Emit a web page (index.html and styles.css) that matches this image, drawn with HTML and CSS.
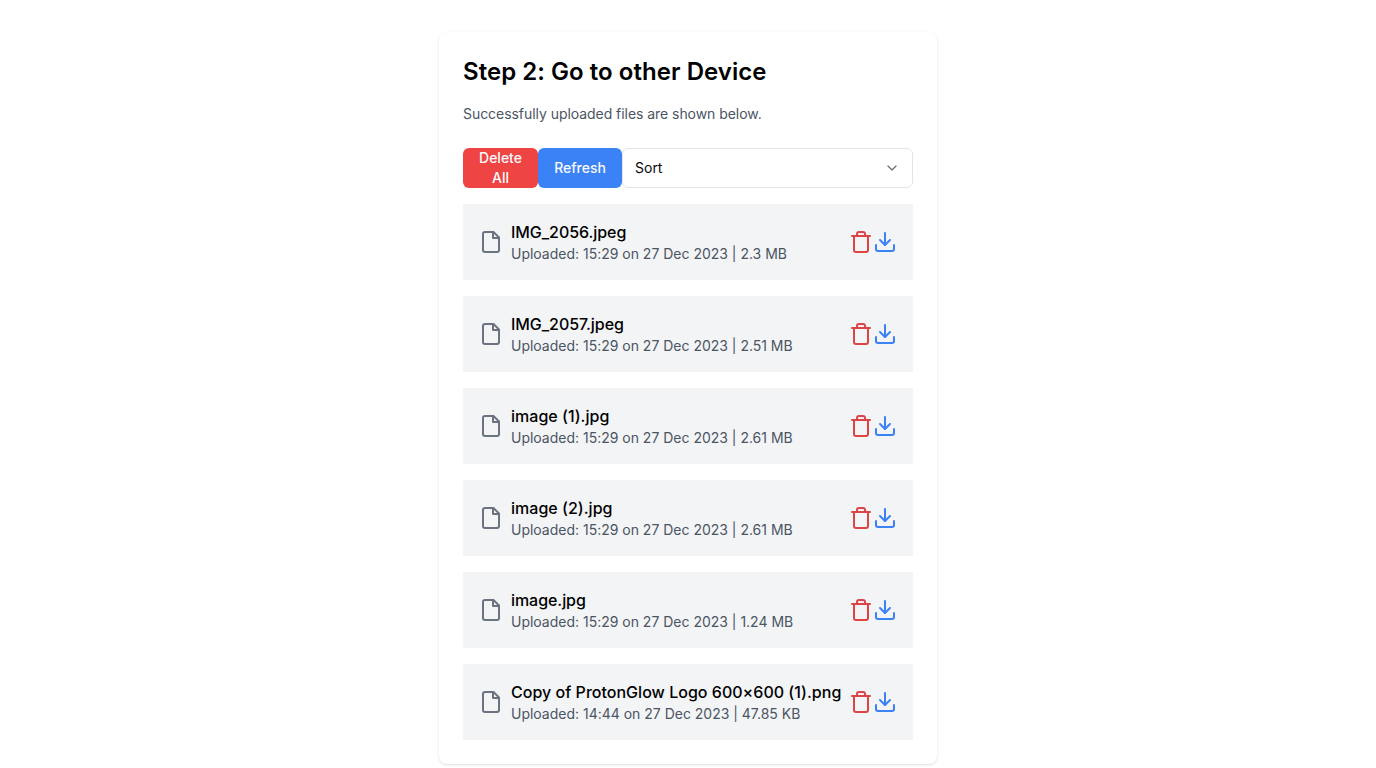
FILE: index.html
```html
<!DOCTYPE html>
<html lang="en">
<head>
<meta charset="utf-8">
<title>Step 2: Go to other Device</title>
<link rel="stylesheet" href="styles.css">
</head>
<body>
<svg class="sprite" aria-hidden="true">
  <symbol id="file" viewBox="0 0 24 24"><path d="M14.5 2H6a2 2 0 0 0-2 2v16a2 2 0 0 0 2 2h12a2 2 0 0 0 2-2V7.5L14.5 2z"/><path d="M14 2v6h6"/></symbol>
  <symbol id="trash" viewBox="0 0 24 24"><path d="M3 6h18"/><path d="M19 6v14c0 1-1 2-2 2H7c-1 0-2-1-2-2V6"/><path d="M8 6V4c0-1 1-2 2-2h4c1 0 2 1 2 2v2"/></symbol>
  <symbol id="download" viewBox="0 0 24 24"><path d="M21 15v4a2 2 0 0 1-2 2H5a2 2 0 0 1-2-2v-4"/><path d="M7 10l5 5 5-5"/><path d="M12 15V3"/></symbol>
  <symbol id="chevron" viewBox="0 0 24 24"><path d="m6 9 6 6 6-6"/></symbol>
</svg>
<main class="card">
  <h2 class="title">Step 2: Go to other Device</h2>
  <p class="subtitle">Successfully uploaded files are shown below.</p>
  <div class="toolbar">
    <button class="btn btn-delete">Delete<br>All</button>
    <button class="btn btn-refresh">Refresh</button>
    <button class="select"><span>Sort</span><svg class="icon icon-chevron"><use href="#chevron"/></svg></button>
  </div>
  <ul class="files">
    <li class="file">
      <svg class="icon icon-file"><use href="#file"/></svg>
      <div class="info"><p class="name name-short">IMG_2056.jpeg</p><p class="meta">Uploaded: 15:29 on 27 Dec 2023 | 2.3 MB</p></div>
      <svg class="icon icon-trash"><use href="#trash"/></svg><svg class="icon icon-download"><use href="#download"/></svg>
    </li>
    <li class="file">
      <svg class="icon icon-file"><use href="#file"/></svg>
      <div class="info"><p class="name name-short">IMG_2057.jpeg</p><p class="meta">Uploaded: 15:29 on 27 Dec 2023 | 2.51 MB</p></div>
      <svg class="icon icon-trash"><use href="#trash"/></svg><svg class="icon icon-download"><use href="#download"/></svg>
    </li>
    <li class="file">
      <svg class="icon icon-file"><use href="#file"/></svg>
      <div class="info"><p class="name">image (1).jpg</p><p class="meta">Uploaded: 15:29 on 27 Dec 2023 | 2.61 MB</p></div>
      <svg class="icon icon-trash"><use href="#trash"/></svg><svg class="icon icon-download"><use href="#download"/></svg>
    </li>
    <li class="file">
      <svg class="icon icon-file"><use href="#file"/></svg>
      <div class="info"><p class="name">image (2).jpg</p><p class="meta">Uploaded: 15:29 on 27 Dec 2023 | 2.61 MB</p></div>
      <svg class="icon icon-trash"><use href="#trash"/></svg><svg class="icon icon-download"><use href="#download"/></svg>
    </li>
    <li class="file">
      <svg class="icon icon-file"><use href="#file"/></svg>
      <div class="info"><p class="name name-short">image.jpg</p><p class="meta">Uploaded: 15:29 on 27 Dec 2023 | 1.24 MB</p></div>
      <svg class="icon icon-trash"><use href="#trash"/></svg><svg class="icon icon-download"><use href="#download"/></svg>
    </li>
    <li class="file">
      <svg class="icon icon-file"><use href="#file"/></svg>
      <div class="info"><p class="name">Copy of ProtonGlow Logo 600×600 (1).png</p><p class="meta">Uploaded: 14:44 on 27 Dec 2023 | 47.85 KB</p></div>
      <svg class="icon icon-trash"><use href="#trash"/></svg><svg class="icon icon-download"><use href="#download"/></svg>
    </li>
  </ul>
</main>
</body>
</html>
```
FILE: styles.css
```css
* {
  box-sizing: border-box;
  margin: 0;
  padding: 0;
}

body {
  height: 100vh;
  padding-top: 32px;
  background: #fff;
  color: #000;
  font: 16px/24px Inter, "Liberation Sans", sans-serif;
}

.sprite {
  display: none;
}

.card {
  width: 498px;
  margin: 0 auto;
  padding: 24px;
  border-radius: 8px;
  background: #fff;
  box-shadow: 0 1px 3px rgb(0 0 0 / 0.1), 0 1px 2px -1px rgb(0 0 0 / 0.1);
}

.title {
  margin-bottom: 16px;
  font-size: 24px;
  line-height: 32px;
  font-weight: 600;
  letter-spacing: 0.04px;
}

.subtitle {
  margin-bottom: 24px;
  font-size: 14px;
  line-height: 20px;
  letter-spacing: -0.05px;
  color: #4b5563;
}

.toolbar {
  display: flex;
  height: 40px;
  margin-bottom: 16px;
}

.btn,
.select {
  display: flex;
  align-items: center;
  border: 0;
  border-radius: 6px;
  font: 500 14px/20px Inter, "Liberation Sans", sans-serif;
}

.btn {
  justify-content: center;
  text-align: center;
  color: #f8fafc;
}

.btn-delete {
  width: 75px;
  background: #ef4444;
}

.btn-refresh {
  width: 84px;
  background: #3b82f6;
}

.select {
  flex: 1;
  justify-content: space-between;
  padding: 0 12px;
  border: 1px solid #e4e4e7;
  background: #fff;
  color: #09090b;
  font-weight: 400;
}

.files {
  display: grid;
  gap: 16px;
  list-style: none;
}

.file {
  display: flex;
  align-items: center;
  height: 76px;
  padding: 16px;
  border-radius: 2px;
  background: #f3f4f6;
}

.info {
  flex: 1;
  margin-left: 8px;
  white-space: nowrap;
}

.name {
  font-weight: 500;
  letter-spacing: 0.02px;
}

.name-short {
  letter-spacing: -0.06px;
}

.meta {
  font-size: 14px;
  line-height: 20px;
  letter-spacing: -0.01px;
  color: #4b5563;
}

.icon {
  flex: none;
  width: 24px;
  height: 24px;
  fill: none;
  stroke: currentColor;
  stroke-width: 2;
  stroke-linecap: round;
  stroke-linejoin: round;
}

.icon-file {
  color: #6b7280;
}

.icon-trash {
  color: #dc4446;
}

.icon-download {
  color: #3b82f6;
}

.icon-chevron {
  width: 16px;
  height: 16px;
  color: #000;
  opacity: 0.55;
}
```
